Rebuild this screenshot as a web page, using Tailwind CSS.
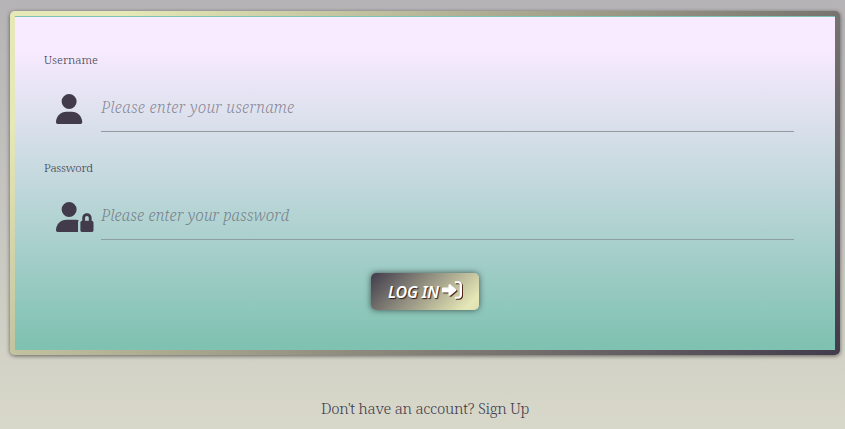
<!DOCTYPE html>
<html lang="en">
<head>
<meta charset="utf-8">
<title>Log in</title>
<script src="https://cdn.jsdelivr.net/npm/@tailwindcss/browser@4"></script>
</head>
<body class="h-[429px] overflow-hidden bg-linear-to-b from-[#b5b3b5] to-[#d8d8ca] px-[10px] pr-[5px] pt-[11px] font-['Noto_Serif','DejaVu_Serif_Condensed','DejaVu_Serif',serif] font-light text-[#413b4c]">
  <main class="h-[344px] rounded-[5px] bg-[linear-gradient(135deg,#e7e8b7_10%,#413b4c_100%)] p-[5px] shadow-[0_1px_4px_rgba(0,0,0,0.55)]">
    <form class="flex h-[334px] flex-col border-t border-[#7cc2b2] bg-[linear-gradient(180deg,#f8eaff_10%,#80c2b2_98%)] pl-[29px] pr-[41px] pt-[35px]">
      <label class="h-4 whitespace-nowrap text-[11.5px] leading-4 font-[350]">Username</label>
      <div class="mt-[11px] flex h-[53px]">
        <svg class="ml-3 mt-[15px] h-[30px] w-[45px] shrink-0" viewBox="0 0 768 512" preserveAspectRatio="xMinYMin meet" fill="#413b4c"><path d="M224 256A128 128 0 1 0 224 0a128 128 0 1 0 0 256zm-45.700 48C79.800 304 0 383.800 0 482.300C0 498.700 13.300 512 29.700 512H418.300c16.400 0 29.700-13.300 29.700-29.700C448 383.800 368.200 304 269.700 304H178.300z"/></svg>
        <div class="flex-1 whitespace-nowrap border-b border-[#979aa1] pt-[16px] text-[15.500px] italic leading-6 tracking-[0.22px] text-[#413b4c]/55">Please enter your username</div>
      </div>
      <label class="mt-7 h-4 whitespace-nowrap text-[11.5px] leading-4 tracking-[-0.3px] font-[350]">Password</label>
      <div class="mt-[11px] flex h-[53px]">
        <svg class="ml-3 mt-[15px] h-[30px] w-[45px] shrink-0" viewBox="0 0 768 512" preserveAspectRatio="xMinYMin meet" fill="#413b4c"><path d="M224 256A128 128 0 1 0 224 0a128 128 0 1 0 0 256zm-45.700 48C79.800 304 0 383.800 0 482.300C0 498.700 13.300 512 29.700 512H377c-5.400-9.400-1-20.300-1-32V352c0-17.300 4-33 12-42c-27-3-48-6-75-6H178.300zM528 240c17.700 0 32 14.300 32 32v48H496V272c0-17.700 14.300-32 32-32zm-80 32v48c-17.700 0-32 14.300-32 32V480c0 17.700 14.300 32 32 32H608c17.700 0 32-14.300 32-32V352c0-17.700-14.300-32-32-32V272c0-44.200-35.800-80-80-80s-80 35.800-80 80z"/></svg>
        <div class="flex-1 whitespace-nowrap border-b border-[#8b9fa0] pt-[16px] text-[15.500px] italic leading-6 tracking-[0.05px] text-[#413b4c]/55">Please enter your password</div>
      </div>
      <button type="button" class="ml-[327px] mt-[33px] flex h-[37px] w-[108px] items-center whitespace-nowrap rounded-[5px] bg-[linear-gradient(135deg,#413b4c,#e7e8b7_90%,#dedfb0)] pl-[17px] font-['Noto_Sans',sans-serif] text-[16px] font-semibold italic tracking-[-0.2px] text-white shadow-[0_0_6px_rgba(0,0,0,0.6)] [text-shadow:1px_1px_1px_#301c1c]">
        <span class="w-[54px] text-left">LOG IN</span>
        <svg class="-mt-[3px] h-[20px] w-[20px] shrink-0 overflow-visible [filter:drop-shadow(1px_1px_0.5px_#50281a)]" viewBox="0 0 512 512" fill="white"><path d="M352 84l64 0c24 0 40 18 40 44l0 256c0 26-16 44-40 44l-64 0c-14 0-25 11-25 26s11 26 25 26l64 0c53 0 96-43 96-96l0-256c0-53-43-96-96-96l-64 0c-14 0-25 11-25 26s11 26 25 26zM217.400 396.900L362.600 277.800c6-5.700 9.400-13.600 9.400-21.800s-3.400-16.100-9.400-21.800L217.400 115.100c-5.800-5.500-13.400-8.600-21.400-8.600c-17.100 0-31 13.900-31 31V192H32c-17.700 0-32 14.300-32 32v64c0 17.700 14.300 32 32 32H165v54.500c0 17.100 13.900 31 31 31c8 0 15.600-3.100 21.400-8.600z"/></svg>
      </button>
    </form>
  </main>
  <p class="mt-[41px] whitespace-nowrap text-center text-[15px] leading-6 tracking-[-0.26px]">Don't have an account? <a href="#">Sign Up</a></p>
</body>
</html>
